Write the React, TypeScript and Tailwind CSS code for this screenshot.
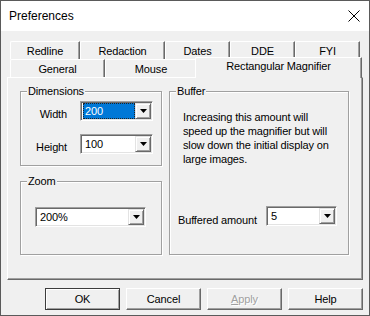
import clsx from "clsx"

const cn = clsx

const row1 = [
  { label: "Redline", w: 70 },
  { label: "Redaction", w: 85 },
  { label: "Dates", w: 65 },
  { label: "DDE", w: 65 },
  { label: "FYI", w: 65 },
]

function Arrow() {
  return (
    <svg width="7" height="4" viewBox="0 0 7 4" className="block">
      <path d="M0 0h7L3.5 4z" fill="#000" />
    </svg>
  )
}

function Combo({ value, w, selected }: { value: string; w: string; selected?: boolean }) {
  return (
    <div
      className={cn(
        "flex h-[20px] border border-t-[#a0a0a0] border-l-[#a0a0a0] border-r-white border-b-white bg-white p-[1px] shadow-[inset_1px_1px_0_#696969,inset_-1px_-1px_0_#e3e3e3]",
        w
      )}
    >
      <div className="flex flex-1 items-center pl-[1px]">
        {selected ? (
          <span className="flex h-[16px] w-full items-center border border-dotted border-[#222] bg-[#0078d7] pl-[1px] text-white">
            {value}
          </span>
        ) : (
          <span className="pl-[2px] text-black">{value}</span>
        )}
      </div>
      <div className="flex w-[16px] items-center justify-center border border-t-[#e3e3e3] border-l-[#e3e3e3] border-r-[#696969] border-b-[#696969] bg-[#f0f0f0] shadow-[inset_1px_1px_0_#fff,inset_-1px_-1px_0_#a0a0a0]">
        <Arrow />
      </div>
    </div>
  )
}

function Group({ label, className, children }: { label: string; className?: string; children?: React.ReactNode }) {
  return (
    <div className={cn("relative border border-[#a0a0a0] shadow-[1px_1px_0_#fff,inset_1px_1px_0_#fff]", className)}>
      <span className="absolute -top-[8px] left-[6px] bg-[#f0f0f0] px-[1px] leading-[14px]">{label}</span>
      {children}
    </div>
  )
}

function Button({ label, primary, disabled }: { label: React.ReactNode; primary?: boolean; disabled?: boolean }) {
  return (
    <button
      className={cn(
        "flex h-[22px] w-[75px] items-center justify-center bg-[#f0f0f0]",
        primary
          ? "border border-[#3c3c3c] shadow-[inset_1px_1px_0_#fff,inset_-1px_-1px_0_#a0a0a0]"
          : "border border-t-white border-l-white border-r-[#696969] border-b-[#696969] shadow-[inset_-1px_-1px_0_#a0a0a0]",
        disabled ? "text-[#a0a0a0] [text-shadow:1px_1px_0_#fff]" : "text-black"
      )}
    >
      {label}
    </button>
  )
}

export default function App() {
  return (
    <div className="flex h-[316px] w-[370px] flex-col border border-[#5a5a5a] bg-[#f0f0f0] font-['Liberation_Sans',Arial,sans-serif] text-[11px] leading-[14px] tracking-[-0.15px] text-black">
      <div className="flex h-[30px] shrink-0 items-center justify-between bg-white pl-[8px] pr-[9px]">
        <span className="text-[12px] tracking-normal">Preferences</span>
        <svg width="12" height="12" viewBox="0 0 12 12">
          <path d="M0.5 0.5l11 11M11.5 0.5l-11 11" stroke="#000" strokeWidth="1" />
        </svg>
      </div>

      <div className="mt-[10px] flex flex-col pl-[9px]">
        <div className="flex h-[18px]">
          {row1.map((t) => (
            <div
              key={t.label}
              style={{ width: t.w }}
              className="flex items-center justify-center rounded-tl-[2px] border-l border-t border-r border-l-white border-t-white border-r-[#696969] shadow-[inset_-1px_0_0_#a0a0a0]"
            >
              {t.label}
            </div>
          ))}
        </div>
        <div className="-mt-[2px] flex h-[20px] items-end">
          <div className="flex h-[18px] w-[95px] items-center justify-center rounded-tl-[2px] border-l border-t border-r border-l-white border-t-white border-r-[#696969] bg-[#f0f0f0] shadow-[inset_-1px_0_0_#a0a0a0]">
            General
          </div>
          <div className="flex h-[18px] w-[92px] items-center justify-center rounded-tl-[2px] border-l border-t border-r border-l-white border-t-white border-r-[#696969] bg-[#f0f0f0] shadow-[inset_-1px_0_0_#a0a0a0]">
            Mouse
          </div>
          <div className="relative z-10 -mb-[1px] -ml-[2px] flex h-[21px] w-[167px] items-start justify-center rounded-tl-[2px] border-l border-t border-r border-l-white border-t-white border-r-[#696969] bg-[#f0f0f0] pt-[1px] shadow-[inset_-1px_0_0_#a0a0a0]">
            Rectangular Magnifier
          </div>
        </div>
      </div>

      <div className="ml-[6px] flex h-[203px] w-[356px] border border-l-white border-t-white border-r-[#696969] border-b-[#696969] pl-[12px] pt-[13px] shadow-[inset_-1px_-1px_0_#a0a0a0]">
        <div className="flex w-[142px] flex-col">
          <Group label="Dimensions" className="h-[75px] pt-[9px]">
            <div className="flex items-start">
              <span className="mt-[6px] w-[46px] text-right">Width</span>
              <div className="ml-[13px]">
                <Combo value="200" w="w-[73px]" selected />
              </div>
            </div>
            <div className="mt-[13px] flex items-start">
              <span className="mt-[6px] w-[46px] text-right">Height</span>
              <div className="ml-[13px]">
                <Combo value="100" w="w-[73px]" />
              </div>
            </div>
          </Group>
          <Group label="Zoom" className="mt-[15px] h-[74px] pl-[14px] pt-[25px]">
            <Combo value="200%" w="w-[111px]" />
          </Group>
        </div>
        <Group label="Buffer" className="ml-[7px] flex h-[164px] w-[180px] flex-col">
          <p className="ml-[13px] mt-[18px]">
            Increasing this amount will
            <br />
            speed up the magnifier but will
            <br />
            slow down the initial display on
            <br />
            large images.
          </p>
          <div className="ml-[8px] mt-[40px] flex items-start">
            <span className="mt-[7px]">Buffered amount</span>
            <div className="ml-auto mr-[11px]">
              <Combo value="5" w="w-[71px]" />
            </div>
          </div>
        </Group>
      </div>

      <div className="mt-[8px] flex justify-end gap-[6px] pr-[6px]">
        <Button label="OK" primary />
        <Button label="Cancel" />
        <Button
          disabled
          label={
            <span>
              <span className="underline">A</span>pply
            </span>
          }
        />
        <Button label="Help" />
      </div>
    </div>
  )
}
